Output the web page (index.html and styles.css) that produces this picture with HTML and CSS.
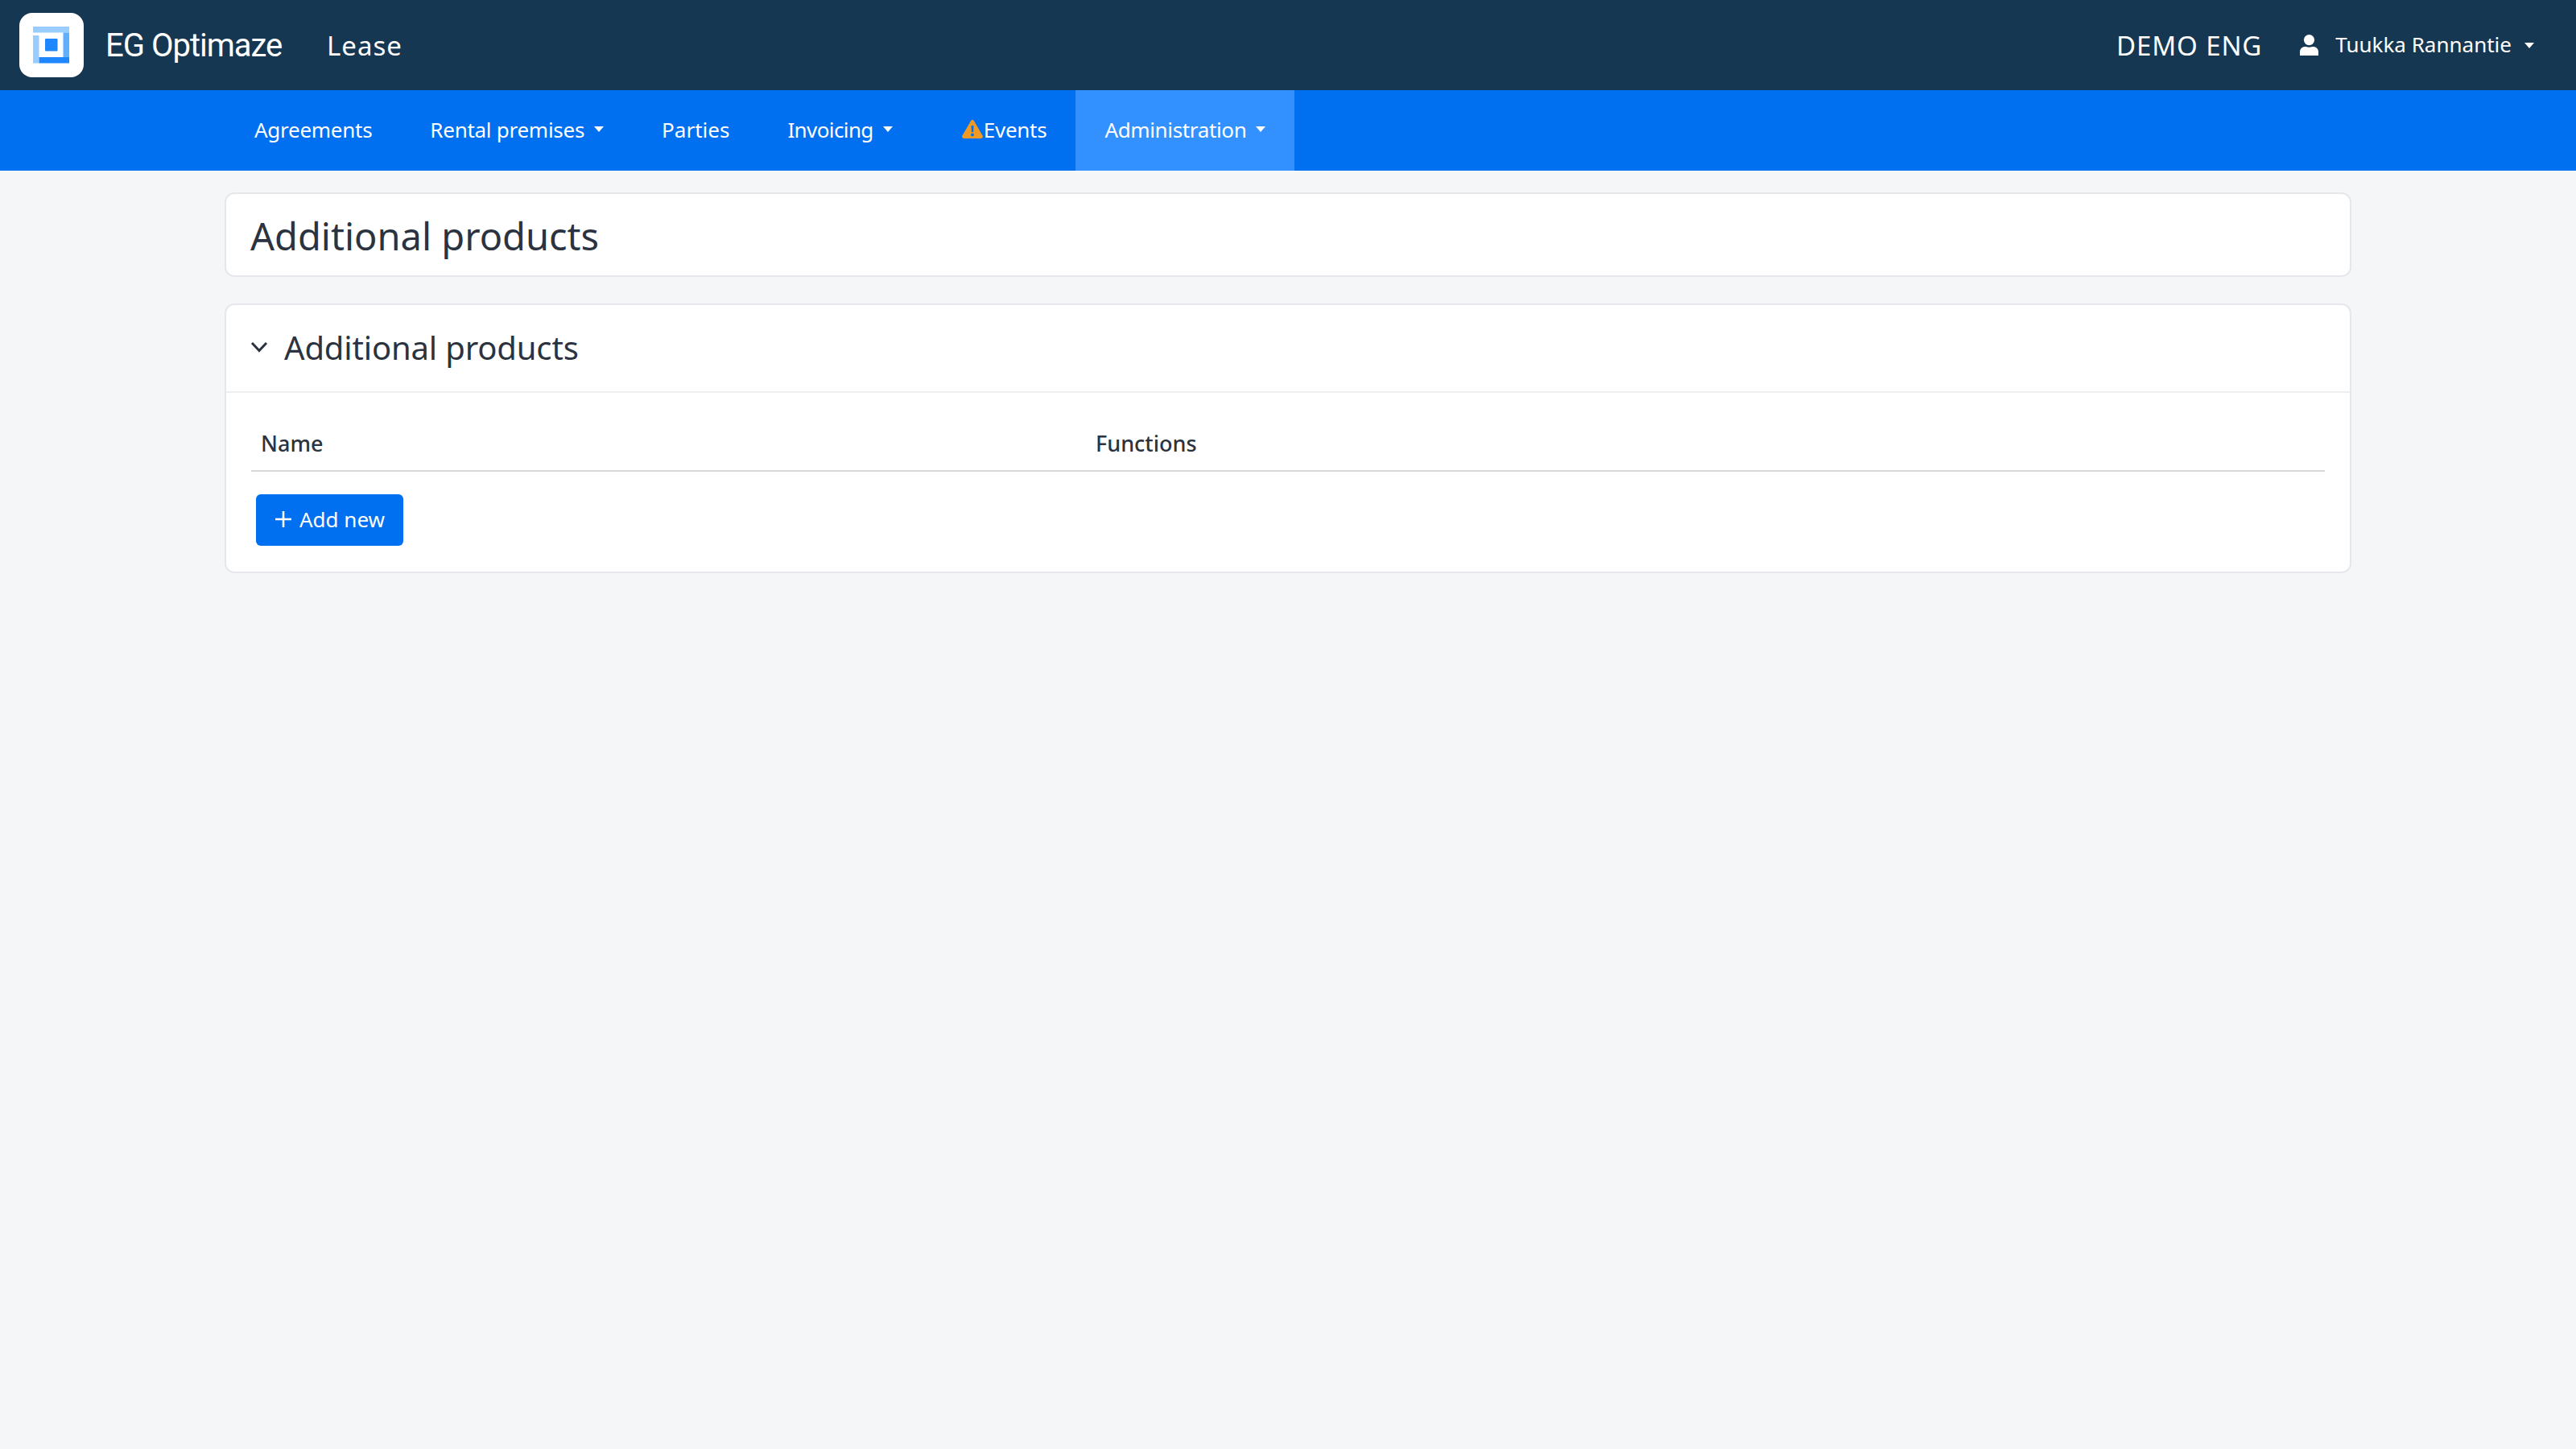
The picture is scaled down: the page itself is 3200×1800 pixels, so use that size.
FILE: index.html
```html
<!DOCTYPE html>
<html lang="en">
<head>
    <meta charset="UTF-8">
    <title>Additional products - EG Optimaze Lease</title>
    <link rel="stylesheet" href="styles.css">
</head>
<body>
    <header class="topbar">
        <div class="brand">
            <div class="logo">
                <svg width="46" height="46" viewBox="0 0 46 46">
                    <rect x="0" y="0" width="45" height="7.5" fill="#99ccff"/>
                    <rect x="37.5" y="7.5" width="7.5" height="30.5" fill="#5cb0ff"/>
                    <rect x="0" y="11" width="7.5" height="34.5" fill="#99ccff"/>
                    <rect x="7.5" y="38" width="37.5" height="7.5" fill="#1e87ff"/>
                    <rect x="15" y="15" width="15.5" height="15.5" rx="1" fill="#1e87ff"/>
                </svg>
            </div>
            <span class="brand-name">EG Optimaze</span>
            <span class="app-name">Lease</span>
        </div>
        <div class="top-right">
            <span class="company">DEMO ENG</span>
            <span class="user">
                <svg class="user-icon" width="23" height="26" viewBox="0 0 23 26">
                    <ellipse cx="11.5" cy="6.6" rx="6.6" ry="6.6" fill="#fff"/>
                    <path d="M0 26v-4.5C0 17.5 3 15 6.5 15h1.2c1.2.5 2.4.8 3.8.8s2.6-.3 3.8-.8h1.2c3.5 0 6.5 2.5 6.5 6.500V26z" fill="#fff"/>
                </svg>
                <span class="user-name">Tuukka Rannantie</span>
                <i class="caret"></i>
            </span>
        </div>
    </header>

    <nav class="mainnav">
        <a class="nav-item">Agreements</a>
        <a class="nav-item">Rental premises<i class="caret"></i></a>
        <a class="nav-item parties">Parties</a>
        <a class="nav-item invoicing">Invoicing<i class="caret"></i></a>
        <a class="nav-item events">
            <svg class="warn-icon" width="26" height="23" viewBox="0 0 26 23">
                <path fill-rule="evenodd" fill="#f09a26" d="M13 0c.9 0 1.600.5 2 1.200l10.600 18.400c.8 1.500-.2 3.400-2 3.400H2.400c-1.800 0-2.800-1.900-2-3.400L11 1.200C11.400.5 12.100 0 13 0zM11.500 7l.4 8h2.200l.4-8zM13 16.500a1.900 1.900 0 1 0 0 3.800 1.900 1.900 0 0 0 0-3.800z"/>
            </svg>Events
        </a>
        <a class="nav-item active">Administration<i class="caret"></i></a>
    </nav>

    <main class="content">
        <section class="card page-title">
            <h1>Additional products</h1>
        </section>

        <section class="card">
            <div class="card-header">
                <svg class="chevron" width="22" height="14" viewBox="0 0 22 14">
                    <path d="M2 2l9 9.500L20 2" fill="none" stroke="#2b3340" stroke-width="3"/>
                </svg>
                <h2>Additional products</h2>
            </div>
            <div class="card-body">
                <table class="grid">
                    <thead>
                        <tr>
                            <th class="col-name">Name</th>
                            <th>Functions</th>
                        </tr>
                    </thead>
                </table>
                <button class="btn">
                    <svg width="22" height="20" viewBox="0 0 22 20">
                        <path d="M11 0v20M1 10h20" stroke="#fff" stroke-width="2.600" fill="none"/>
                    </svg>
                    Add new
                </button>
            </div>
        </section>
    </main>
</body>
</html>
```

FILE: styles.css
```css
* {
    box-sizing: border-box;
}
body {
    margin: 0;
    min-height: 1800px;
    background-color: #f5f6f8;
    color: #2b3340;
    font-family: "Noto Sans", Arial, sans-serif;
    font-size: 26px;
}
.topbar {
    height: 112px;
    background-color: #163752;
    color: white;
    display: flex;
    justify-content: space-between;
    align-items: center;
    padding: 0 52px 0 24px;
}
.brand {
    display: flex;
    align-items: center;
}
.logo {
    width: 80px;
    height: 80px;
    background: white;
    border-radius: 16px;
    display: flex;
    align-items: center;
    justify-content: center;
    margin-right: 27px;
}
.brand-name {
    font-family: Roboto, sans-serif;
    font-size: 40px;
    letter-spacing: -1px;
    width: 275px;
}
.app-name {
    font-size: 33px;
    letter-spacing: 1px;
}
.top-right {
    display: flex;
    align-items: center;
}
.company {
    font-size: 33px;
    letter-spacing: 0.9px;
    margin-right: 47px;
}
.user {
    display: flex;
    align-items: center;
}
.user-name {
    margin: 0 4px 0 21px;
    padding-bottom: 2px;
}
.caret {
    display: inline-block;
    margin-left: 12px;
    border-top: 7px solid white;
    border-left: 6px solid transparent;
    border-right: 6px solid transparent;
}
.mainnav {
    height: 100px;
    background-color: #0070f0;
    display: flex;
    padding-left: 280px;
}
.nav-item {
    display: flex;
    align-items: center;
    padding: 0 36px 3px;
    color: white;
    letter-spacing: -0.27px;
}
.nav-item.parties {
    letter-spacing: 0;
}
.nav-item.invoicing {
    letter-spacing: -0.6px;
}
.nav-item.active {
    background-color: #3391ff;
    letter-spacing: -0.35px;
}
.warn-icon {
    margin-left: 14px;
    margin-right: 1px;
}
.content {
    width: 2642px;
    margin: 27px auto 0;
}
.card {
    background: white;
    border: 2px solid #e6e7ea;
    border-radius: 12px;
    margin-bottom: 33px;
}
.page-title {
    height: 105px;
    display: flex;
    align-items: center;
    padding: 2px 0 0 30px;
}
h1 {
    margin: 0;
    font-size: 47px;
    font-weight: 400;
}
.card-header {
    height: 109px;
    display: flex;
    align-items: center;
    padding: 0 0 3px 30px;
    border-bottom: 2px solid #eeeeee;
}
h2 {
    margin: 0 0 0 20px;
    font-size: 40px;
    font-weight: 400;
    letter-spacing: -0.15px;
}
.card-body {
    padding: 0 31px 32px;
}
.grid {
    width: 100%;
    border-collapse: collapse;
}
.grid th {
    height: 97px;
    padding: 28px 12px 0;
    text-align: left;
    font-size: 27px;
    font-weight: 500;
    border-bottom: 2px solid #d8d8d8;
}
.col-name {
    width: 1037px;
}
.btn {
    display: flex;
    align-items: center;
    gap: 9px;
    height: 64px;
    margin: 28px 0 0 6px;
    padding: 0 23px 3px;
    background-color: #0070f0;
    color: white;
    border: none;
    border-radius: 6px;
    font-family: inherit;
    font-size: 26px;
}
```
